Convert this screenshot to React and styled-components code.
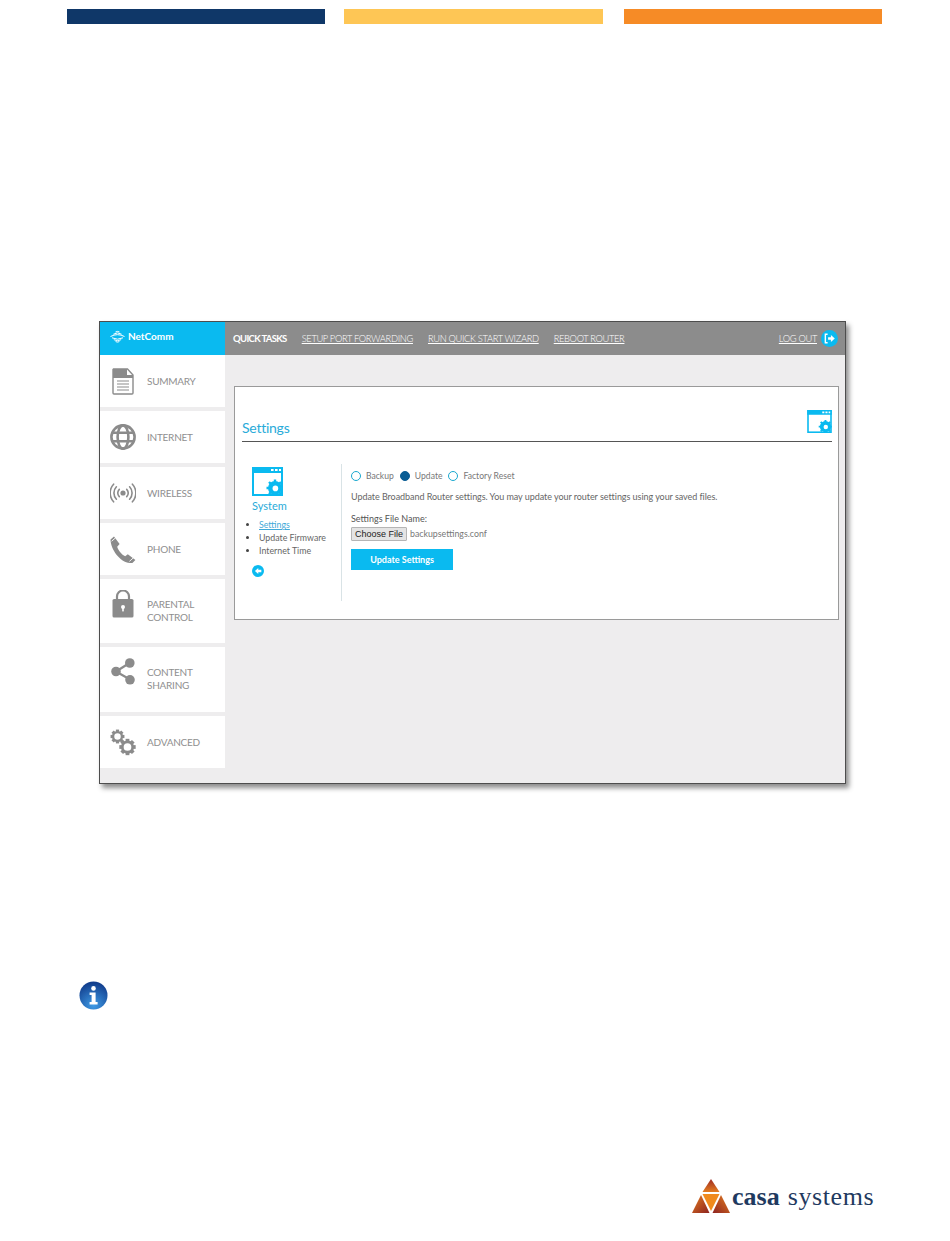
import React from 'react'
import styled, { createGlobalStyle } from 'styled-components'

const BLUE = '#0abaf0'
const ICON_GREY = '#8b8b8b'

const Global = createGlobalStyle`
  html, body { margin: 0; padding: 0; background: #fff; }
  body { font-family: Lato, "Open Sans", sans-serif; }
  * { box-sizing: border-box; }
`

const navItems = [
  { key: 'summary', label: ['SUMMARY'], h: 52, icon: <DocIcon /> },
  { key: 'internet', label: ['INTERNET'], h: 52, icon: <GlobeIcon /> },
  { key: 'wireless', label: ['WIRELESS'], h: 52, icon: <WirelessIcon /> },
  { key: 'phone', label: ['PHONE'], h: 52, icon: <PhoneIcon /> },
  { key: 'parental', label: ['PARENTAL', 'CONTROL'], h: 64, icon: <LockIcon /> },
  { key: 'sharing', label: ['CONTENT', 'SHARING'], h: 65, icon: <ShareIcon /> },
  { key: 'advanced', label: ['ADVANCED'], h: 52, icon: <GearsIcon /> },
]

function DocIcon() {
  return (
    <svg width="22" height="27" viewBox="0 0 22 27">
      <path d="M1.5 1h14l5.5 6v18a1 1 0 0 1-1 1H2a1 1 0 0 1-1-1V1.5z" fill="#fff" stroke={ICON_GREY} strokeWidth="1.4" />
      <path d="M1 1h14v6h6v3H1z" fill={ICON_GREY} />
      <path d="M5 13h12M5 16h12M5 19h12M5 22h12" stroke={ICON_GREY} strokeWidth="1" />
    </svg>
  )
}

function GlobeIcon() {
  return (
    <svg width="26" height="26" viewBox="0 0 26 26" fill="none" stroke={ICON_GREY} strokeWidth="2.6">
      <circle cx="13" cy="13" r="11.6" />
      <ellipse cx="13" cy="13" rx="5.4" ry="11.6" />
      <path d="M2.5 8.8h21M2.5 17.2h21" />
    </svg>
  )
}

function WirelessIcon() {
  return (
    <svg width="26" height="20" viewBox="0 0 26 20" fill="none" stroke={ICON_GREY} strokeWidth="1.6" strokeLinecap="round">
      <circle cx="13" cy="10" r="2.6" fill={ICON_GREY} stroke="none" />
      <path d="M9.3 6.4a5 5 0 0 0 0 7.2M16.7 6.4a5 5 0 0 1 0 7.2" />
      <path d="M6.4 3.8a9 9 0 0 0 0 12.4M19.6 3.8a9 9 0 0 1 0 12.4" />
      <path d="M3.6 1.2a13 13 0 0 0 0 17.6M22.4 1.2a13 13 0 0 1 0 17.6" />
    </svg>
  )
}

function PhoneIcon() {
  return (
    <svg width="26" height="27" viewBox="0 0 26 27">
      <path d="M0.5 3.5 4 .5l5.6 7.6-2.4 2.6c1 3.6 4.6 8 8 9.6l2.6-2 7.6 5.6-3 3C11.4 28.5.7 14 .5 3.5z" fill={ICON_GREY} />
      <path d="M1.6 5.2 5.6 1.8M19.4 25.4l4-3.6" stroke="#fff" strokeWidth="0.9" />
    </svg>
  )
}

function LockIcon() {
  return (
    <svg width="22" height="28" viewBox="0 0 22 28">
      <path d="M5 12V6.5a6 6 0 0 1 12 0V12" fill="none" stroke={ICON_GREY} strokeWidth="2.2" />
      <rect x="0.5" y="9" width="21" height="18.5" rx="1.6" fill={ICON_GREY} />
      <circle cx="11" cy="17" r="2" fill="#fff" />
      <rect x="10.2" y="17" width="1.6" height="4.4" fill="#fff" />
    </svg>
  )
}

function ShareIcon() {
  return (
    <svg width="24" height="27" viewBox="0 0 24 27">
      <path d="M5 13.5 18.5 5M5 13.5l14 8" stroke={ICON_GREY} strokeWidth="2.2" />
      <circle cx="5" cy="13.5" r="4.8" fill={ICON_GREY} />
      <circle cx="18.8" cy="5" r="4.8" fill={ICON_GREY} />
      <circle cx="19" cy="21.8" r="4.8" fill={ICON_GREY} />
    </svg>
  )
}

function Cog({ cx, cy, r, sw }) {
  const teeth = Array.from({ length: 8 }, (_, i) => i * 45)
  return (
    <g>
      <circle cx={cx} cy={cy} r={r} fill="none" stroke={ICON_GREY} strokeWidth={sw} />
      {teeth.map(a => (
        <rect
          key={a}
          x={cx - sw * 0.7}
          y={cy - r - sw * 1.1}
          width={sw * 1.4}
          height={sw}
          fill={ICON_GREY}
          transform={`rotate(${a} ${cx} ${cy})`}
        />
      ))}
    </g>
  )
}

function GearsIcon() {
  return (
    <svg width="26" height="27" viewBox="0 0 26 27">
      <Cog cx={7.5} cy={7.5} r={4.4} sw={2.3} />
      <Cog cx={17.5} cy={18} r={5.2} sw={2.7} />
    </svg>
  )
}

// window with a little cog in the corner, used twice at different sizes
function SystemIcon({ w, h }) {
  return (
    <svg width={w} height={h} viewBox="0 0 31 29">
      <rect x="1" y="1" width="29" height="27" fill="#fff" stroke={BLUE} strokeWidth="2" />
      <rect x="0" y="0" width="31" height="6" fill={BLUE} />
      <path d="M19 3h2.6M23 3h2.6M27 3h2" stroke="#fff" strokeWidth="2" />
      <circle cx="23" cy="21" r="7" fill={BLUE} />
      <path d="M23 12.5v16.5M14.5 21h16.5M17 15l12 12M29 15 17 27" stroke={BLUE} strokeWidth="2.4" />
      <circle cx="23.4" cy="21.4" r="2.8" fill="#fff" />
    </svg>
  )
}

function WifiMark() {
  return (
    <svg width="15" height="13" viewBox="0 0 15 13" fill="none" stroke="#fff" strokeWidth="1">
      <path d="M5.5 2Q7.5.8 9.5 2" />
      <path d="M3.4 4.2Q7.5 1.6 11.6 4.2" />
      <path d="M.5 6.5Q7.5 2.8 14.5 6.5" />
      <path d="M2 7.8Q7.5 10.6 13 7.8" />
      <path d="M3.8 9.7Q7.5 11.7 11.2 9.7" />
      <path d="M5.6 11.6Q7.5 12.6 9.4 11.6" />
    </svg>
  )
}

function ArrowDisc({ size, dir }) {
  return (
    <svg width={size} height={size} viewBox="0 0 18 18">
      <circle cx="9" cy="9" r="9" fill={BLUE} />
      {dir === 'out' ? (
        <>
          <path d="M7 4.5H4.6v9H7" fill="none" stroke="#fff" strokeWidth="1.5" />
          <path d="M7.5 7.6h3V5.2L14.6 9l-4.1 3.8v-2.4h-3z" fill="#fff" />
        </>
      ) : (
        <path d="M14 7.2H9.4V4.4L4.4 9l5 4.6v-2.8H14z" fill="#fff" />
      )}
    </svg>
  )
}

function InfoIcon() {
  return (
    <svg width="29" height="29" viewBox="0 0 29 29">
      <defs>
        <radialGradient id="infoBall" cx="50%" cy="85%" r="80%">
          <stop offset="0%" stopColor="#3f9be6" />
          <stop offset="100%" stopColor="#123f8e" />
        </radialGradient>
      </defs>
      <circle cx="14.5" cy="14.5" r="14" fill="url(#infoBall)" />
      <circle cx="14.5" cy="7.4" r="2.3" fill="#fff" />
      <path d="M10.6 11.6h6v9.4h2v2.4h-8V21h2v-7h-2z" fill="#fff" />
    </svg>
  )
}

function CasaMark() {
  return (
    <svg width="40" height="36" viewBox="0 0 40 36">
      <defs>
        <linearGradient id="casaTop" x1="0" y1="0" x2="0" y2="1">
          <stop offset="0%" stopColor="#9c2a22" />
          <stop offset="100%" stopColor="#e47d20" />
        </linearGradient>
        <linearGradient id="casaLeft" x1="0" y1="0" x2="1" y2="1">
          <stop offset="0%" stopColor="#e47d20" />
          <stop offset="100%" stopColor="#8d2320" />
        </linearGradient>
        <linearGradient id="casaRight" x1="1" y1="0" x2="0" y2="1">
          <stop offset="0%" stopColor="#e47d20" />
          <stop offset="100%" stopColor="#8d2320" />
        </linearGradient>
      </defs>
      <path d="M20 1 28.5 14h-17z" fill="url(#casaTop)" />
      <path d="M11.5 16h17L20 33z" fill="#f08a1d" />
      <path d="M10 17 18.5 35H1z" fill="url(#casaLeft)" />
      <path d="M30 17 39 35H21.5z" fill="url(#casaRight)" />
    </svg>
  )
}

export default function App() {
  return (
    <Page>
      <Global />
      <Bars>
        <Bar $color="#0f3768" $w={258} $ml={0} />
        <Bar $color="#fec655" $w={259} $ml={19} />
        <Bar $color="#f68b26" $w={258} $ml={21} />
      </Bars>

      <Shot>
        <TopBar>
          <Brand>
            <WifiMark />
            <BrandName>NetComm</BrandName>
          </Brand>
          <QuickLinks>
            <QuickTitle>QUICK TASKS</QuickTitle>
            <QuickLink>SETUP PORT FORWARDING</QuickLink>
            <QuickLink>RUN QUICK START WIZARD</QuickLink>
            <QuickLink>REBOOT ROUTER</QuickLink>
          </QuickLinks>
          <LogOut>
            <QuickLink>LOG OUT</QuickLink>
            <ArrowDisc size={17} dir="out" />
          </LogOut>
        </TopBar>

        <ShotBody>
          <SideNav>
            {navItems.map(item => (
              <NavItem key={item.key} $h={item.h} $top={item.label.length > 1}>
                <NavIcon>{item.icon}</NavIcon>
                <NavLabel $top={item.label.length > 1}>
                  {item.label.map(line => (
                    <div key={line}>{line}</div>
                  ))}
                </NavLabel>
              </NavItem>
            ))}
          </SideNav>

          <Main>
            <Panel>
              <PanelHead>
                <PanelTitle>Settings</PanelTitle>
                <SystemIcon w={25} h={23} />
              </PanelHead>
              <PanelBody>
                <SubNav>
                  <SystemIcon w={31} h={29} />
                  <SubNavTitle>System</SubNavTitle>
                  <SubList>
                    <SubItem $active>Settings</SubItem>
                    <SubItem>Update Firmware</SubItem>
                    <SubItem>Internet Time</SubItem>
                  </SubList>
                  <ArrowDisc size={12} dir="back" />
                </SubNav>
                <Form>
                  <RadioRow>
                    <Radio /><RadioLabel>Backup</RadioLabel>
                    <Radio $on /><RadioLabel>Update</RadioLabel>
                    <Radio /><RadioLabel>Factory Reset</RadioLabel>
                  </RadioRow>
                  <Desc>Update Broadband Router settings. You may update your router settings using your saved files.</Desc>
                  <FileLabel>Settings File Name:</FileLabel>
                  <FileRow>
                    <ChooseButton>Choose File</ChooseButton>
                    <FileName>backupsettings.conf</FileName>
                  </FileRow>
                  <SubmitButton>Update Settings</SubmitButton>
                </Form>
              </PanelBody>
            </Panel>
          </Main>
        </ShotBody>
      </Shot>

      <InfoWrap>
        <InfoIcon />
      </InfoWrap>

      <Footer>
        <CasaMark />
        <CasaText>
          <CasaBold>casa</CasaBold>
          <CasaLight>systems</CasaLight>
        </CasaText>
      </Footer>
    </Page>
  )
}

const Page = styled.div`
  width: 950px;
  height: 1241px;
  padding-top: 9px;
  overflow: hidden;
  background: #fff;
`

const Bars = styled.div`
  display: flex;
  margin-left: 67px;
`

const Bar = styled.div`
  width: ${p => p.$w}px;
  height: 15px;
  margin-left: ${p => p.$ml}px;
  background: ${p => p.$color};
`

const Shot = styled.div`
  width: 747px;
  height: 463px;
  margin: 297px 0 0 99px;
  border: 1px solid #4d4d4d;
  background: #eeedee;
  box-shadow: 3px 4px 5px rgba(0, 0, 0, 0.45);
`

const TopBar = styled.div`
  display: flex;
  align-items: stretch;
  height: 33px;
  background: #8c8c8c;
`

const Brand = styled.div`
  display: flex;
  align-items: center;
  gap: 3px;
  width: 125px;
  padding: 0 0 5px 10px;
  background: ${BLUE};
`

const BrandName = styled.span`
  color: #fff;
  font-size: 10px;
  font-weight: 700;
`

const QuickLinks = styled.div`
  display: flex;
  align-items: center;
  gap: 15px;
  padding-left: 8px;
  flex: 1;
`

const QuickTitle = styled.span`
  color: #fff;
  font-size: 9.5px;
  font-weight: 700;
  letter-spacing: -0.66px;
`

const QuickLink = styled.span`
  color: #fff;
  font-size: 9.3px;
  font-weight: 300;
  letter-spacing: -0.33px;
  text-decoration: underline;
`

const LogOut = styled.div`
  display: flex;
  align-items: center;
  gap: 4px;
  padding-right: 7px;
`

const ShotBody = styled.div`
  display: flex;
`

const SideNav = styled.div`
  display: flex;
  flex-direction: column;
  gap: 4px;
  width: 125px;
`

const NavItem = styled.div`
  display: flex;
  align-items: ${p => (p.$top ? 'flex-start' : 'center')};
  height: ${p => p.$h}px;
  padding-top: ${p => (p.$top ? '11px' : '0')};
  background: #fff;
`

const NavIcon = styled.div`
  display: flex;
  justify-content: center;
  flex: 0 0 45px;
  margin-right: 2px;
`

const NavLabel = styled.div`
  color: #8f8f8f;
  font-size: 10px;
  line-height: 13px;
  letter-spacing: -0.25px;
  padding-top: ${p => (p.$top ? '8px' : '0')};
`

const Main = styled.div`
  flex: 1;
  padding: 31px 6px 0 9px;
`

const Panel = styled.div`
  height: 234px;
  padding: 0 6px 0 7px;
  background: #fff;
  border: 1px solid #9a9a9a;
`

const PanelHead = styled.div`
  display: flex;
  align-items: flex-end;
  justify-content: space-between;
  height: 55px;
  padding-bottom: 8px;
  border-bottom: 1px solid #555;
`

const PanelTitle = styled.h1`
  margin: 0 0 -3px;
  color: #29abd9;
  font-size: 14px;
  font-weight: 400;
  letter-spacing: -0.25px;
`

const PanelBody = styled.div`
  display: flex;
  padding-top: 22px;
`

const SubNav = styled.div`
  display: flex;
  flex-direction: column;
  align-items: flex-start;
  width: 100px;
  height: 137px;
  padding: 3px 0 0 10px;
  border-right: 1px solid #d9e3e6;
`

const SubNavTitle = styled.div`
  margin-top: 2px;
  color: #29abd9;
  font-size: 11px;
  line-height: 15px;
`

const SubList = styled.ul`
  margin: 5px 0 8px -3px;
  padding: 0 0 0 10px;
  list-style: disc;
  width: 85px;
`

const SubItem = styled.li`
  color: ${p => (p.$active ? '#3fa9d8' : '#666')};
  font-size: 8.8px;
  line-height: 13px;
  text-decoration: ${p => (p.$active ? 'underline' : 'none')};
  white-space: nowrap;

  &::marker {
    color: #444;
  }
`

const Form = styled.div`
  display: flex;
  flex-direction: column;
  align-items: flex-start;
  padding-left: 9px;
`

const RadioRow = styled.div`
  display: flex;
  align-items: center;
  height: 12px;
  margin-top: 6px;
`

const Radio = styled.span`
  width: 10px;
  height: 10px;
  border-radius: 50%;
  border: 1px solid ${p => (p.$on ? '#0a5d94' : '#19a8cf')};
  background: ${p => (p.$on ? '#0a5d94' : '#fff')};
`

const RadioLabel = styled.span`
  margin: 0 6px 0 5px;
  color: #777;
  font-size: 8.6px;
`

const Desc = styled.p`
  margin: 9px 0 0;
  color: #666;
  font-size: 9px;
  line-height: 12px;
  letter-spacing: -0.05px;
  white-space: nowrap;
`

const FileLabel = styled.div`
  margin-top: 10px;
  color: #555;
  font-size: 9px;
  line-height: 12px;
`

const FileRow = styled.div`
  display: flex;
  align-items: center;
  gap: 3px;
  margin-top: 2px;
`

const ChooseButton = styled.button`
  width: 56px;
  height: 14px;
  padding: 0;
  border: 1px solid #b5b5b5;
  border-radius: 1px;
  background: #e4e4e4;
  color: #222;
  font-family: "Liberation Sans", Arial, sans-serif;
  font-size: 9px;
  line-height: 12px;
`

const FileName = styled.span`
  margin-top: -1px;
  color: #777;
  font-size: 8.8px;
`

const SubmitButton = styled.button`
  width: 102px;
  height: 21px;
  margin-top: 8px;
  padding: 0;
  border: 0;
  background: ${BLUE};
  color: #fff;
  font-family: Lato, sans-serif;
  font-size: 9px;
  font-weight: 700;
`

const InfoWrap = styled.div`
  margin: 197px 0 0 79px;
  line-height: 0;
`

const Footer = styled.div`
  display: flex;
  align-items: flex-end;
  gap: 1px;
  margin: 168px 0 0 691px;
`

const CasaText = styled.div`
  display: flex;
  gap: 8px;
  padding-bottom: 4px;
  color: #1f3a60;
  font-family: "Liberation Serif", serif;
  line-height: 26px;
`

const CasaBold = styled.span`
  font-size: 26px;
  font-weight: 700;
`

const CasaLight = styled.span`
  font-size: 26px;
  letter-spacing: 0.6px;
`
